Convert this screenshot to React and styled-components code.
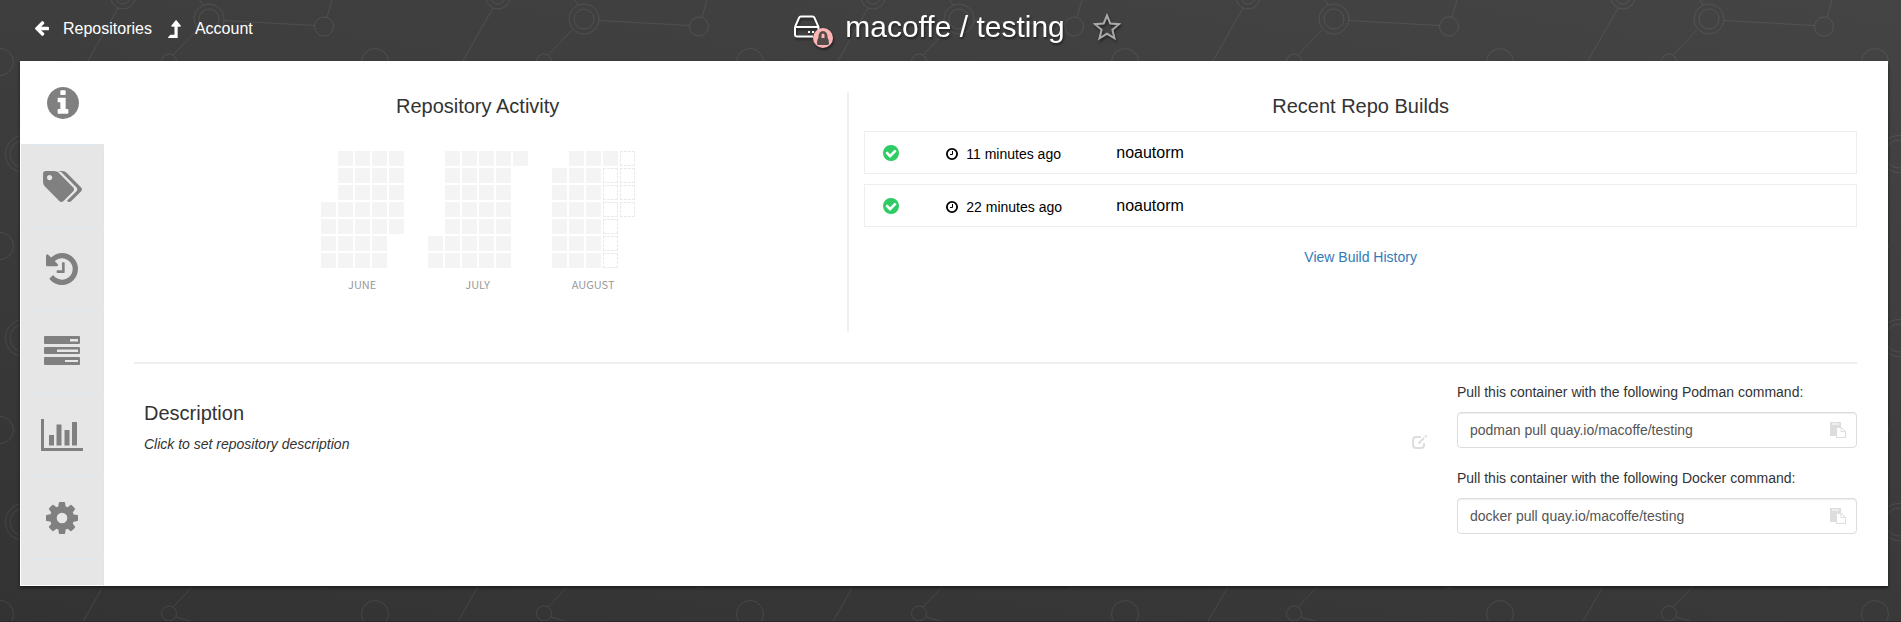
import React from 'react';
import styled, { createGlobalStyle } from 'styled-components';

const Global = createGlobalStyle`
  * { box-sizing: border-box; }
  body { margin: 0; font: 14px/20px "Liberation Sans", Arial, sans-serif; color: #333; }
  h1, h2, p { margin: 0; font-weight: 400; }
  a { color: #337ab7; text-decoration: none; }
  button { border: 0; padding: 0; background: none; cursor: pointer; font: inherit; }
`;

const Page = styled.div`
  position: relative;
  min-height: 100vh;
  padding: 0 13px 0 20px;
  background: linear-gradient(10deg, #333, #444);
  border-bottom: 1px solid #2f272b;
  isolation: isolate;
`;
const Backdrop = styled.svg`
  position: absolute;
  inset: 0;
  width: 100%;
  height: 100%;
  z-index: -1;
`;
const Header = styled.header`
  display: grid;
  grid-template-columns: 1fr auto 1fr;
  height: 61px;
  padding-left: 6px;
`;
const Crumbs = styled.nav`
  display: flex;
  align-items: center;
  gap: 16px;
  height: 57px;
  padding-left: 9px;
`;
const Crumb = styled.a`
  display: flex;
  align-items: center;
  gap: 14px;
  color: #fff;
  font-size: 16px;
`;
const Title = styled.div`
  display: flex;
  align-items: center;
  height: 54px;
  gap: 10px;
  color: #fff;
  filter: drop-shadow(1px 2px 1px #222);
  h1 { font-size: 30px; line-height: 36px; }
`;
const StarButton = styled.button`
  margin-left: 18px;
  display: flex;
`;
const Panel = styled.main`
  display: flex;
  min-height: 525px;
  background: #fff;
  box-shadow: 0 2px 3px #1c1c1c;
`;
const Tabs = styled.nav`
  flex: 0 0 84px;
  background: #e6e6e6;
  border: 1px solid #fff;
  border-right-color: #dde5ed;
`;
const Tab = styled.a`
  display: flex;
  align-items: center;
  justify-content: center;
  height: 83px;
  margin-right: ${p => (p.$active ? -1 : 0)}px;
  color: #808080;
  background: ${p => (p.$active ? '#fff' : 'transparent')};
  border-bottom: 1px solid #dde5ed;
`;
const Content = styled.div`
  flex: 1;
  padding: 31px 31px 30px 30px;
`;
const Summary = styled.section`
  display: flex;
  padding-bottom: 30px;
  border-bottom: 2px solid #eee;
`;
const Column = styled.div`
  min-height: 240px;
  min-width: 0;
`;
const ActivityColumn = styled(Column)`
  flex: 9;
  padding-right: 26px;
`;
const BuildsColumn = styled(Column)`
  flex: 13;
  padding-left: 15px;
  border-left: 2px solid #eee;
`;
const Heading = styled.h2`
  font-size: 20px;
  line-height: 28px;
  text-align: ${p => (p.$centered ? 'center' : 'left')};
`;
const Months = styled.div`
  display: flex;
  justify-content: center;
  gap: 24px;
  margin-top: 31px;
`;
const Month = styled.div`
  text-align: center;
  font: 11px/16px "Noto Sans CJK SC", "Noto Sans", sans-serif;
  color: #999;
`;
const Days = styled.div`
  display: grid;
  grid-template-rows: repeat(7, 15px);
  grid-auto-columns: 15px;
  grid-auto-flow: column;
  gap: 2px;
  margin-bottom: 8px;
`;
const Day = styled.div`
  grid-row-start: ${p => p.$start || 'auto'};
  background: ${p => (p.$future ? 'transparent' : '#f4f4f4')};
  border: ${p => (p.$future ? '1px dashed #eaeaea' : '0')};
`;
const BuildList = styled.div`
  padding-top: 11px;
`;
const Build = styled.a`
  display: flex;
  align-items: center;
  height: 43px;
  margin-bottom: 10px;
  padding-left: 18px;
  border: 1px solid #eee;
  color: #000;
`;
const Time = styled.span`
  display: flex;
  align-items: center;
  gap: 8px;
  width: 170px;
  margin-left: 47px;
  padding-top: 3px;
`;
const Trigger = styled.span`
  font-size: 16px;
`;
const History = styled.p`
  margin-top: 20px;
  text-align: center;
`;
const Details = styled.section`
  display: flex;
  gap: 30px;
  padding-top: 18px;
`;
const Description = styled.div`
  flex: 1;
  padding: 17px 0 0 10px;
`;
const DescriptionRow = styled.div`
  display: flex;
  justify-content: space-between;
  margin-top: 7px;
  font-style: italic;
`;
const Commands = styled.div`
  flex: 0 0 400px;
`;
const Command = styled.div`
  margin-bottom: 20px;
  label { display: block; margin-bottom: 10px; }
`;
const Field = styled.div`
  display: flex;
  align-items: center;
  height: 36px;
  padding: 0 10px 0 12px;
  border: 1px solid #ddd;
  border-radius: 4px;
  box-shadow: inset 0 1px 1px #eee;
  input {
    flex: 1;
    min-width: 0;
    border: 0;
    padding: 0;
    outline: 0;
    background: none;
    font: inherit;
    color: #555;
  }
  button { display: flex; }
`;

const DISC = 'm0 0M1664 896q0 209-103 385.500t-279.500 279.500-385.500 103-385.500-103-279.500-279.500-103-385.500 103-385.500 279.500-279.500 385.500-103 385.500 103 279.500 279.500 103 385.500z';

const GLYPHS = {
  info: `M1152 1376v-160q0-14-9-23t-23-9h-96v-512q0-14-9-23t-23-9h-320q-14 0-23 9t-9 23v160q0 14 9 23t23 9h96v320h-96q-14 0-23 9t-9 23v160q0 14 9 23t23 9h448q14 0 23-9t9-23zm-128-896v-160q0-14-9-23t-23-9h-192q-14 0-23 9t-9 23v160q0 14 9 23t23 9h192q14 0 23-9t9-23z${DISC}`,
  check: `M1412 734q0-28-18-46l-91-90q-19-19-45-19t-45 19l-408 407-226-226q-19-19-45-19t-45 19l-91 90q-18 18-18 46 0 27 18 45l362 362q19 19 45 19 27 0 46-19l543-543q18-18 18-45z${DISC}`,
  arrowLeft: 'M1664 896v128q0 53-32.500 90.500t-84.500 37.500h-704l293 294q38 36 38 90t-38 90l-75 76q-37 37-90 37-52 0-91-37l-651-652q-37-37-37-90 0-52 37-91l651-650q38-38 91-38 52 0 90 38l75 74q38 38 38 91t-38 91l-293 293h704q52 0 84.500 37.500t32.500 90.500z',
  levelUp: 'M1337 567q-17 39-59 39h-192v864q0 14-9 23t-23 9h-704q-21 0-29-18-8-20 4-35l160-192q9-11 25-11h320v-640h-192q-40 0-59-37-17-37 9-68l320-384q18-22 49-22t49 22l320 384q27 32 10 68z',
  tags: 'M576 448q0-53-37.500-90.500t-90.500-37.500-90.500 37.500-37.500 90.500 37.500 90.500 90.500 37.500 90.500-37.500 37.500-90.500zm1067 576q0 53-37 90l-491 492q-39 37-91 37-53 0-90-37l-715-716q-38-37-64.500-101t-26.500-117v-416q0-52 38-90t90-38h416q53 0 117 26.500t102 64.500l715 714q37 39 37 91zm384 0q0 53-37 90l-491 492q-39 37-91 37-36 0-59-14t-53-45l470-470q37-37 37-90 0-52-37-91l-715-714q-38-38-102-64.500t-117-26.500h224q53 0 117 26.500t102 64.500l715 714q37 39 37 91z',
  history: 'M1664 896q0 156-61 298t-164 245-245 164-298 61q-172 0-327-72.500t-264-204.500q-7-10-6.500-22.500t8.500-20.500l137-138q10-9 25-9 16 2 23 12 73 95 179 147t225 52q104 0 198.500-40.500t163.500-109.500 109.500-163.500 40.500-198.500-40.500-198.500-109.500-163.500-163.500-109.500-198.500-40.500q-98 0-188 35.500t-160 101.500l137 138q31 30 14 69-17 40-59 40h-448q-26 0-45-19t-19-45v-448q0-42 40-59 39-17 69 14l130 129q107-101 244.500-156.500t284.500-55.500q156 0 298 61t245 164 164 245 61 298zm-640-288v448q0 14-9 23t-23 9h-320q-14 0-23-9t-9-23v-64q0-14 9-23t23-9h224v-352q0-14 9-23t23-9h64q14 0 23 9t9 23z',
  cog: 'M1152 896q0-106-75-181t-181-75-181 75-75 181 75 181 181 75 181-75 75-181zm512-109v222q0 12-8 23t-20 13l-185 28q-19 54-39 91 35 50 107 138 10 12 10 25t-9 23q-27 37-99 108t-94 71q-12 0-26-9l-138-108q-44 23-91 38-16 136-29 186-7 28-36 28h-222q-14 0-24.500-8.500t-11.500-21.500l-28-184q-49-16-90-37l-141 107q-10 9-25 9-14 0-25-11-126-114-165-168-7-10-7-23 0-12 8-23 15-21 51-66.500t54-70.500q-27-50-41-99l-183-27q-13-2-21-12.500t-8-23.500v-222q0-12 8-23t19-13l186-28q14-46 39-92-40-57-107-138-10-12-10-24 0-10 9-23 26-36 98.500-107.500t94.500-71.500q13 0 26 10l138 107q44-23 91-38 16-136 29-186 7-28 36-28h222q14 0 24.500 8.500t11.500 21.500l28 184q49 16 90 37l142-107q9-9 24-9 13 0 25 10 129 119 165 170 7 8 7 22 0 12-8 23-15 21-51 66.500t-54 70.500q26 50 41 98l183 28q13 2 21 12.500t8 23.500z',
};

function Glyph({ name, width, height = width, box = '128 128 1536 1536', color = 'currentColor' }) {
  return (
    <svg width={width} height={height} viewBox={box} fill={color} aria-hidden="true">
      <path fillRule="evenodd" d={GLYPHS[name]} />
    </svg>
  );
}

function Network() {
  return (
    <Backdrop aria-hidden="true">
      <defs>
        <pattern id="network" width="375" height="184" patternUnits="userSpaceOnUse">
          <g fill="none" stroke="#fff" strokeOpacity="0.08">
            <circle cx="0" cy="62" r="13.5" />
            <circle cx="375" cy="62" r="13.5" />
            <circle cx="24" cy="154" r="18.5" />
            <circle cx="24" cy="154" r="14" />
            <circle cx="123" cy="-3" r="12" />
            <circle cx="123" cy="-3" r="7" />
            <circle cx="123" cy="181" r="12" />
            <circle cx="123" cy="181" r="7" />
            <circle cx="209" cy="19" r="15" />
            <circle cx="209" cy="19" r="10" />
            <circle cx="324" cy="26.5" r="9.5" />
            <circle cx="169" cy="61.5" r="7.5" />
            <path d="M224 20.5 314.500 25.500M327 17 332 0M118 8 81 73M197 30 173 55M200 0 203 5M176 65 200 72" />
          </g>
        </pattern>
      </defs>
      <rect width="100%" height="100%" fill="url(#network)" />
    </Backdrop>
  );
}

const RepoIcon = () => (
  <svg width="42" height="42" viewBox="0 0 42 42" fill="none" aria-hidden="true">
    <path d="M2 21 6 12Q6.500 10.500 8 10.500H19.500Q21 10.500 21.500 12L25.500 21V26M2 21H25.500M2 21V28.500Q2 30.500 4 30.500H20" stroke="#fff" strokeWidth="2" />
    <path d="M15 25h2v2h-2zM19 25h2v2h-2z" fill="#fff" />
    <circle cx="30" cy="32" r="10" fill="#fbb5b5" />
    <path d="M24 37.500q0-4 1.500-6Q25.500 25 30 25t4.500 6.500q1.500 2 1.500 6 0 1.500-1.500 1.500h-9Q24 39 24 37.500z" fill="#554a4a" />
    <path d="M28.500 32v-3q0-1.500 1.500-1.500t1.500 1.500v3z" fill="#fbb5b5" />
  </svg>
);

const StarIcon = () => (
  <svg width="28" height="28" viewBox="0 0 28 28" fill="none" stroke="#aaa" strokeWidth="2" aria-hidden="true">
    <path d="M14 2.500 17.300 10.500 26 11.200 19.400 16.800 21.500 25.300 14 20.700 6.500 25.300 8.600 16.800 2 11.200 10.700 10.500Z" />
  </svg>
);

const TasksIcon = () => (
  <svg width="36" height="32" viewBox="0 0 36 32" fill="currentColor" aria-hidden="true">
    <path fillRule="evenodd" d="M1 0h34q1 0 1 1v6q0 1-1 1H1q-1 0-1-1V1q0-1 1-1zM26 3v2.500h8V3zM1 11h34q1 0 1 1v5q0 1-1 1H1q-1 0-1-1v-5q0-1 1-1zM13 13.500V16h21v-2.500zM1 21h34q1 0 1 1v6q0 1-1 1H1q-1 0-1-1v-6q0-1 1-1zM21 24v2h13v-2z" />
  </svg>
);

const ChartIcon = () => (
  <svg width="42" height="32" viewBox="0 0 42 32" fill="currentColor" aria-hidden="true">
    <path d="M0 0h3v29h39v3H0zM8 16h5v10.500H8zM15.500 5.500h5v21h-5zM23.500 11h5v15.500h-5zM31 3h5v23.500h-5z" />
  </svg>
);

const ClockIcon = () => (
  <svg width="12" height="12" viewBox="0 0 12 12" fill="none" stroke="#000" aria-hidden="true">
    <circle cx="6" cy="6" r="5.100" strokeWidth="1.800" />
    <path d="M6.500 3v3.500H4" />
  </svg>
);

const EditIcon = () => (
  <svg width="15" height="14" viewBox="0 0 15 14" fill="none" stroke="#ddd" strokeWidth="2" aria-hidden="true">
    <path d="M9 2H4Q1 2 1 5v5q0 3 3 3h5q3 0 3-3V8M6.500 8.500 12 3M13 2l1.500-1.500" />
  </svg>
);

const PasteIcon = () => (
  <svg width="16" height="16" viewBox="0 0 16 16" aria-hidden="true">
    <path d="M0 0h11v5H6v9H0z" fill="#ddd" />
    <path d="M2 1.500h7v1H2z" fill="#fff" />
    <path d="M6.500 5.500h5l4 4v6h-9zM11 5.500v4h4" fill="#fff" stroke="#ddd" />
  </svg>
);

const TABS = [
  ['Information', <Glyph name="info" width={32} />],
  ['Tags', <Glyph name="tags" width={39} height={31} box="128 128 1900 1516" />],
  ['Tag History', <Glyph name="history" width={32} />],
  ['Builds', <TasksIcon />],
  ['Usage Logs', <ChartIcon />],
  ['Settings', <Glyph name="cog" width={32} />],
];

const MONTHS = [
  { name: 'JUNE', start: 4, past: 30, future: 0 },
  { name: 'JULY', start: 6, past: 31, future: 0 },
  { name: 'AUGUST', start: 2, past: 21, future: 10 },
];

const BUILDS = ['11 minutes ago', '22 minutes ago'];

function MonthGrid({ name, start, past, future }) {
  return (
    <Month>
      <Days>
        {Array.from({ length: past + future }, (_, i) => (
          <Day key={i} $start={i === 0 ? start : undefined} $future={i >= past} />
        ))}
      </Days>
      {name}
    </Month>
  );
}

function PullCommand({ tool }) {
  const id = `${tool.toLowerCase()}-command`;
  return (
    <Command>
      <label htmlFor={id}>Pull this container with the following {tool} command:</label>
      <Field>
        <input id={id} readOnly value={`${tool.toLowerCase()} pull quay.io/macoffe/testing`} />
        <button type="button" aria-label={`Copy ${tool} command`}><PasteIcon /></button>
      </Field>
    </Command>
  );
}

export default function App() {
  return (
    <Page>
      <Global />
      <Network />
      <Header>
        <Crumbs>
          <Crumb href="#repositories">
            <Glyph name="arrowLeft" width={14} height={15} box="192 181 1472 1558" />Repositories
          </Crumb>
          <Crumb href="#account">
            <Glyph name="levelUp" width={13} height={18} box="317 68 1033 1434" />Account
          </Crumb>
        </Crumbs>
        <Title>
          <RepoIcon />
          <h1>macoffe / testing</h1>
          <StarButton type="button" aria-label="Star repository"><StarIcon /></StarButton>
        </Title>
      </Header>
      <Panel>
        <Tabs>
          {TABS.map(([label, icon], i) => (
            <Tab key={label} href={`#tab-${i}`} aria-label={label} $active={i === 0}>{icon}</Tab>
          ))}
        </Tabs>
        <Content>
          <Summary>
            <ActivityColumn>
              <Heading $centered>Repository Activity</Heading>
              <Months>
                {MONTHS.map(m => <MonthGrid key={m.name} {...m} />)}
              </Months>
            </ActivityColumn>
            <BuildsColumn>
              <Heading $centered>Recent Repo Builds</Heading>
              <BuildList>
                {BUILDS.map(time => (
                  <Build key={time} href="#build">
                    <Glyph name="check" width={16} color="#2fcc66" />
                    <Time><ClockIcon />{time}</Time>
                    <Trigger>noautorm</Trigger>
                  </Build>
                ))}
              </BuildList>
              <History><a href="#history">View Build History</a></History>
            </BuildsColumn>
          </Summary>
          <Details>
            <Description>
              <Heading>Description</Heading>
              <DescriptionRow>
                <span>Click to set repository description</span>
                <button type="button" aria-label="Edit description"><EditIcon /></button>
              </DescriptionRow>
            </Description>
            <Commands>
              <PullCommand tool="Podman" />
              <PullCommand tool="Docker" />
            </Commands>
          </Details>
        </Content>
      </Panel>
    </Page>
  );
}
